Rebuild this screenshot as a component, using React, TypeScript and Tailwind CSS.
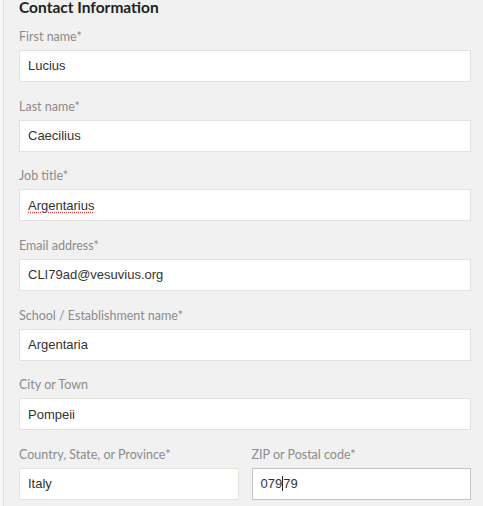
const fields = [
  { label: "First name*", value: "Lucius" },
  { label: "Last name*", value: "Caecilius" },
  { label: "Job title*", value: "Argentarius", misspelled: true },
  { label: "Email address*", value: "CLI79ad@vesuvius.org" },
  { label: "School / Establishment name*", value: "Argentaria" },
  { label: "City or Town", value: "Pompeii" },
];

const Field = ({ label, children, focused }: { label: string; children: React.ReactNode; focused?: boolean }) => (
  <div className="mb-[14.67px]">
    <div className="text-[12.5px] leading-5 text-[#8c8c8c] mb-[3px]" style={{ fontFamily: "Lato, 'Open Sans', sans-serif" }}>
      {label}
    </div>
    <div
      className={`h-8 bg-white border flex items-center px-[8px] text-[13px] text-[#333] ${focused ? "border-[#c4c4c0]" : "border-[#e3e3dc]"}`}
      style={{ fontFamily: "'Liberation Sans', Arial, sans-serif" }}
    >
      {children}
    </div>
  </div>
);

export default function App() {
  return (
    <div className="w-[483px] h-[506px] overflow-hidden bg-[#f6f6f6]">
      <div className="ml-[3px] h-full bg-[#f1f1f1] border-l border-[#e2e2e2] pl-[15px] pr-[12px]">
        <h2 className="text-[15.5px] font-bold text-[#222] leading-[12px] pt-px mb-[14px]" style={{ fontFamily: "Lato, 'Open Sans', sans-serif" }}>
          Contact Information
        </h2>
        {fields.map((f) => (
          <Field key={f.label} label={f.label}>
            {f.misspelled ? (
              <span className="underline decoration-dotted decoration-[#d04040] underline-offset-2">{f.value}</span>
            ) : (
              f.value
            )}
          </Field>
        ))}
        <div className="grid grid-cols-2 gap-[13px]">
          <Field label="Country, State, or Province*">Italy</Field>
          <Field label="ZIP or Postal code*" focused>
            079<span className="inline-block w-px h-[15px] bg-[#222]" />79
          </Field>
        </div>
      </div>
    </div>
  );
}
